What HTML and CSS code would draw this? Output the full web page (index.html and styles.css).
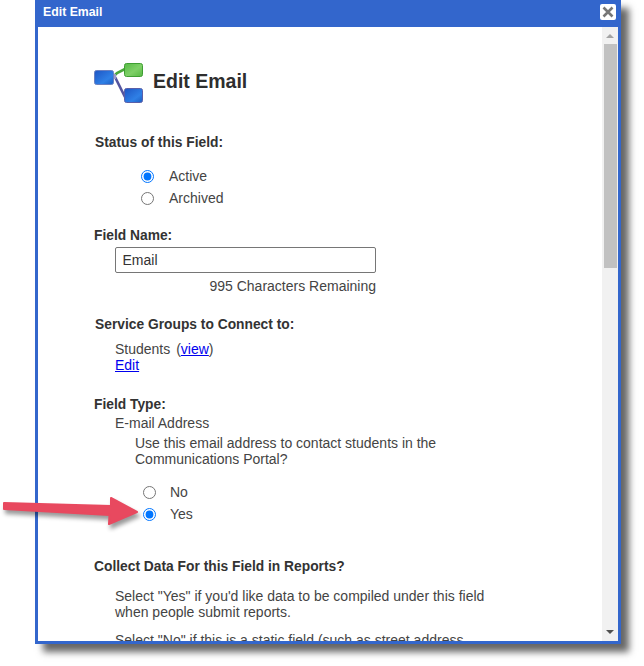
FILE: index.html
```html
<!DOCTYPE html>
<html lang="en">
<head>
<meta charset="utf-8">
<title>Edit Email</title>
<link rel="stylesheet" href="styles.css">
</head>
<body>
<div class="dialog">
  <header class="titlebar">
    <span class="title">Edit Email</span>
    <button class="close" aria-label="Close">
      <svg width="12" height="12" viewBox="0 0 12 12"><path d="M1.5 1.500 10.500 10.500M10.500 1.500 1.500 10.500" stroke="#777" stroke-width="2.6"/></svg>
    </button>
  </header>
  <div class="body">
    <main class="content">
      <div class="heading">
        <svg class="logo" width="52" height="44" viewBox="0 0 52 44">
          <defs>
            <linearGradient id="b" x1="0" y1="0" x2="1" y2="1"><stop offset="0" stop-color="#1d55c4"/><stop offset=".65" stop-color="#2f80e6"/><stop offset="1" stop-color="#1c5cc0"/></linearGradient>
            <linearGradient id="g" x1="0" y1="0" x2="1" y2="1"><stop offset="0" stop-color="#57bb45"/><stop offset=".55" stop-color="#7fd068"/><stop offset="1" stop-color="#56b843"/></linearGradient>
          </defs>
          <path d="M22 17 32 37" stroke="#55559f" stroke-width="2.6" fill="none"/>
          <path d="M21 16 24 13 32 9" stroke="#4aa83a" stroke-width="2.6" fill="none"/>
          <rect x="19" y="14" width="4" height="5" fill="#9a9ac8"/>
          <rect x="1.500" y="10.500" width="19" height="14" rx="2" fill="url(#b)" stroke="#6a80c0"/>
          <rect x="31.500" y="3.500" width="18" height="13" rx="2" fill="url(#g)" stroke="#3f9e33"/>
          <rect x="31.500" y="28.500" width="18" height="14" rx="2" fill="url(#b)" stroke="#5a5fa8"/>
        </svg>
        <h1>Edit Email</h1>
      </div>

      <h2 class="label label-status">Status of this Field:</h2>
      <div class="radios radios-status">
        <label class="radio"><input type="radio" name="status" checked><span>Active</span></label>
        <label class="radio"><input type="radio" name="status"><span>Archived</span></label>
      </div>

      <h2 class="label label-name">Field Name:</h2>
      <div class="indent">
        <input class="textbox" type="text" value="Email">
        <div class="remaining">995 Characters Remaining</div>
      </div>

      <h2 class="label label-groups">Service Groups to Connect to:</h2>
      <div class="indent groups">
        <div>Students <span class="view">(<a href="#">view</a>)</span></div>
        <div><a href="#">Edit</a></div>
      </div>

      <h2 class="label label-type">Field Type:</h2>
      <div class="indent">
        <div class="type">E-mail Address</div>
        <p class="question">Use this email address to contact students in the Communications Portal?</p>
      </div>
      <div class="radios radios-yesno">
        <label class="radio"><input type="radio" name="portal"><span>No</span></label>
        <label class="radio"><input type="radio" name="portal" checked><span>Yes</span></label>
      </div>

      <h2 class="label label-collect">Collect Data For this Field in Reports?</h2>
      <div class="indent notes">
        <p>Select "Yes" if you'd like data to be compiled under this field when people submit reports.</p>
        <p>Select "No" if this is a static field (such as street address</p>
      </div>
    </main>
    <div class="scrollbar">
      <div class="arrow-up"></div>
      <div class="thumb"></div>
      <div class="arrow-down"></div>
    </div>
  </div>
</div>
<svg class="pointer" width="150" height="50" viewBox="0 0 150 50">
  <path d="M4 13 111 16 111 8 137 22 109 34 109.500 25 4 19Z" fill="#e8495f" stroke="#e8495f" stroke-width="2" stroke-linejoin="round"/>
</svg>
</body>
</html>
```
FILE: styles.css
```css
* { box-sizing: border-box; }
html, body { margin: 0; padding: 0; height: 100%; background: #fff; overflow: hidden; }
body { font: 14px/16px "Liberation Sans", Arial, sans-serif; color: #333; position: relative; }

.dialog {
  margin-left: 35px;
  width: 586px;
  height: 644px;
  background: #3366cc;
  border: 3px solid #3366cc;
  border-top: 0;
  display: flex;
  flex-direction: column;
  box-shadow: 8px 8px 7px rgba(0, 0, 0, .6);
}

.titlebar {
  height: 27px;
  flex: none;
  display: flex;
  align-items: center;
  justify-content: space-between;
  padding: 0 2px 3px 5px;
}
.title { color: #fff; font-size: 12.300px; font-weight: bold; }
.close {
  width: 16px;
  height: 16px;
  padding: 0;
  border: 0;
  border-radius: 2px;
  background: #fff;
  display: flex;
  align-items: center;
  justify-content: center;
}

.body { flex: 1; min-height: 0; display: flex; background: #fff; }
.content { flex: 1; min-width: 0; overflow: hidden; padding: 32px 0 0 56px; }
.content p { margin: 0; }

.heading { display: flex; align-items: center; gap: 8px; margin-left: -1px; height: 46px; }
.heading .logo { width: 52px; height: 44px; }
h1 { margin: 0; padding-bottom: 2px; font-size: 19.500px; line-height: 24px; font-weight: bold; color: #2e2e2e; }

.label { margin: 0; padding-top: 1px; font-size: 13.800px; line-height: 16px; font-weight: bold; color: #333; }
.label-status { margin-top: 29px; margin-left: 1px; }
.label-name { margin-top: 21px; }
.label-groups { margin-top: 22px; margin-left: 1px; }
.label-type { margin-top: 23px; }
.label-collect { margin-top: 36px; }

.radios { display: flex; flex-direction: column; gap: 6px; }
.radios-status { margin: 17px 0 0 47px; }
.radios-yesno { margin: 17px 0 0 49px; }
.radios-yesno .radio input { margin-right: 14px; }
.radio { display: flex; align-items: center; height: 16px; color: #444; }
.radio input { margin: 0 15px 0 0; width: 13px; height: 13px; flex: none; accent-color: #0075ff; }

.indent { margin-left: 21px; color: #444; }
.textbox {
  display: block;
  margin-top: 3px;
  width: 261px;
  height: 26px;
  padding: 0 6.500px;
  border: 1px solid #767676;
  border-radius: 2px;
  font: 14px "Liberation Sans", Arial, sans-serif;
  color: #333;
}
.remaining { width: 261px; margin-top: 5px; text-align: right; }
.groups { margin-top: 8px; }
.groups a { color: #0000ee; }
.view { margin-left: 2px; }
.type { margin-top: 2px; }
.question { margin: 4px 0 0 20px !important; width: 330px; }
.notes { margin-top: 13px; width: 390px; }
.notes p + p { margin-top: 12px; }

.scrollbar { width: 16px; flex: none; background: #f1f1f1; position: relative; padding: 17px 1px 0 2px; }
.thumb { height: 224px; background: #c1c1c1; }
.arrow-up, .arrow-down { position: absolute; left: 4px; width: 0; height: 0; border-left: 4px solid transparent; border-right: 4px solid transparent; }
.arrow-up { top: 7px; border-bottom: 4px solid #a3a3a3; }
.arrow-down { bottom: 7px; border-top: 4px solid #505050; }

.pointer { position: absolute; left: 0; top: 490px; filter: drop-shadow(2px 4px 2px rgba(0, 0, 0, .4)); }
```
